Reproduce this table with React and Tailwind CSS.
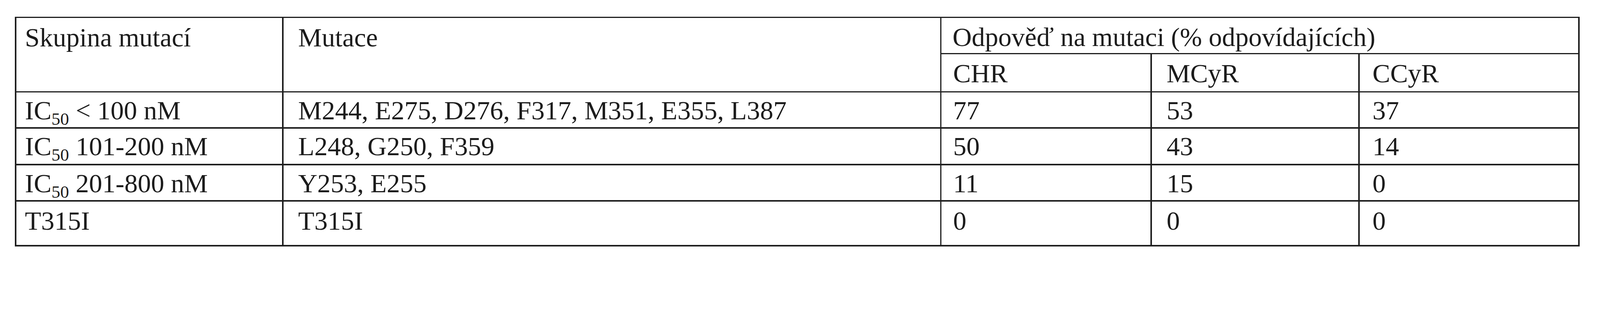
const rows = [
  { group: '< 100 nM', ic: true, mut: 'M244, E275, D276, F317, M351, E355, L387', chr: '77', mcyr: '53', ccyr: '37', pt: 'pt-[8.5px]' },
  { group: '101-200 nM', ic: true, mut: 'L248, G250, F359', chr: '50', mcyr: '43', ccyr: '14', pt: 'pt-[8.5px]' },
  { group: '201-800 nM', ic: true, mut: 'Y253, E255', chr: '11', mcyr: '15', ccyr: '0', pt: 'pt-[9.5px]' },
  { group: 'T315I', ic: false, mut: 'T315I', chr: '0', mcyr: '0', ccyr: '0', pt: 'pt-[12.5px]' },
];

function Cell({ className = '', children }) {
  return <div className={`bg-white leading-[75px] whitespace-nowrap ${className}`}>{children}</div>;
}

export default function App() {
  return (
    <div
      className="w-full min-h-screen bg-white pl-[38.3px] pt-[42.6px] text-[#1c1c1c] text-[68px]"
      style={{ fontFamily: '"Liberation Serif", "Times New Roman", serif' }}
    >
      <div className="inline-grid grid-cols-[680.5px_1681.2px_535.1px_528.2px_559.5px] grid-rows-[89.6px_94.9px_88.8px_90.5px_89.6px_111.4px] gap-[3.48px] p-[3.48px] bg-[#1e1e1e]">
        {/* header */}
        <Cell className="row-span-2 pl-[22px] pt-[12.5px]">Skupina mutací</Cell>
        <Cell className="row-span-2 pl-[37.5px] pt-[12.5px]">Mutace</Cell>
        <Cell className="col-span-3 pl-[28px] pt-[11.5px]">Odpověď na mutaci (% odpovídajících)</Cell>
        <Cell className="pl-[29.5px] pt-[11.5px]">CHR</Cell>
        <Cell className="pl-[37.5px] pt-[11.5px]">MCyR</Cell>
        <Cell className="pl-[33px] pt-[11.5px]">CCyR</Cell>

        {rows.map((r) => (
          <div key={r.mut} className="contents">
            <Cell className={`pl-[22px] ${r.pt}`}>
              {r.ic ? (
                <>
                  IC<sub className="text-[45px] bottom-[-14px]">50</sub> {r.group}
                </>
              ) : (
                r.group
              )}
            </Cell>
            <Cell className={`pl-[37.5px] ${r.pt}`}>{r.mut}</Cell>
            <Cell className={`pl-[29.5px] ${r.pt}`}>{r.chr}</Cell>
            <Cell className={`pl-[37.5px] ${r.pt}`}>{r.mcyr}</Cell>
            <Cell className={`pl-[33px] ${r.pt}`}>{r.ccyr}</Cell>
          </div>
        ))}
      </div>
    </div>
  );
}
